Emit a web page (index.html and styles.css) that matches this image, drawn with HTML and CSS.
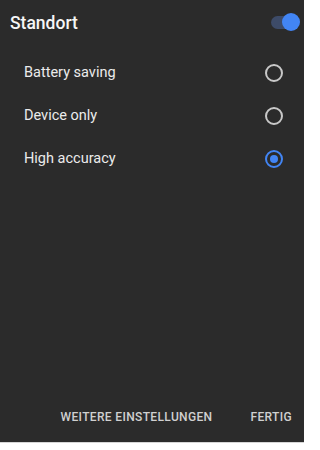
FILE: index.html
```html
<!DOCTYPE html>
<html lang="de">
<head>
<meta charset="utf-8">
<link rel="stylesheet" href="styles.css">
</head>
<body>
<div class="page">
  <div class="dialog">
    <div class="header">
      <span class="title">Standort</span>
      <span class="switch"><span class="track"></span><span class="thumb"></span></span>
    </div>
    <div class="list">
      <div class="row"><span class="label">Battery saving</span><span class="radio"></span></div>
      <div class="row"><span class="label">Device only</span><span class="radio"></span></div>
      <div class="row"><span class="label">High accuracy</span><span class="radio checked"></span></div>
    </div>
    <div class="spacer"></div>
    <div class="footer">
      <span class="btn">WEITERE EINSTELLUNGEN</span>
      <span class="btn">FERTIG</span>
    </div>
  </div>
  <div class="below"></div>
</div>
</body>
</html>
```
FILE: styles.css
```css
html, body {
  margin: 0;
  padding: 0;
  background: #ffffff;
  overflow: hidden;
}
body {
  font-family: Roboto, "Noto Sans", sans-serif;
}
.page {
  width: 304px;
}
.dialog {
  height: 442px;
  background: #2b2b2b;
  display: flex;
  flex-direction: column;
}
.header {
  height: 43px;
  display: flex;
  align-items: center;
  justify-content: space-between;
  padding: 0 4px 0 10px;
}
.title {
  font-size: 17.5px;
  font-weight: 500;
  color: #f6f6f6;
  margin-top: 3px;
}
.switch {
  position: relative;
  width: 29px;
  height: 18px;
}
.track {
  position: absolute;
  left: 0;
  top: 3px;
  width: 24px;
  height: 13px;
  border-radius: 7px;
  background: #3d4b68;
}
.thumb {
  position: absolute;
  right: 0;
  top: 0;
  width: 18px;
  height: 18px;
  border-radius: 50%;
  background: #4285f4;
}
.list {
  padding-top: 8px;
}
.row {
  height: 43px;
  display: flex;
  align-items: center;
  justify-content: space-between;
  padding: 0 21px 0 24px;
}
.label {
  font-size: 14.5px;
  color: #ebebeb;
}
.radio {
  width: 14px;
  height: 14px;
  border: 2px solid #c8c8c8;
  border-radius: 50%;
  display: flex;
  align-items: center;
  justify-content: center;
}
.radio.checked {
  border-color: #4285f4;
}
.radio.checked::after {
  content: "";
  width: 8px;
  height: 8px;
  border-radius: 50%;
  background: #4285f4;
}
.spacer {
  flex: 1;
}
.footer {
  height: 50px;
  display: flex;
  align-items: center;
  justify-content: flex-end;
  gap: 38px;
  padding: 0 12px 0 0;
}
.btn {
  font-size: 12px;
  font-weight: 500;
  color: #d0d0d0;
  letter-spacing: 0.35px;
}
.below {
  border-top: 1px solid #d6d6d6;
  height: 7px;
  background: #ffffff;
}
```
